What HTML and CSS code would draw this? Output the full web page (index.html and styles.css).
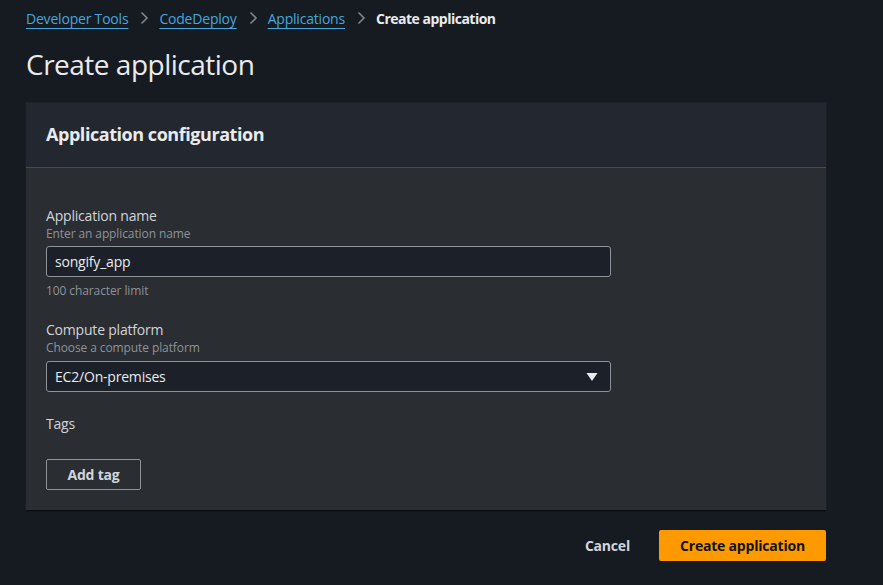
FILE: index.html
```html
<!DOCTYPE html>
<html lang="en">
<head>
<meta charset="utf-8">
<title>Create application</title>
<link rel="stylesheet" href="styles.css">
</head>
<body>
<div class="page">
  <nav class="breadcrumbs">
    <a class="crumb" href="#">Developer Tools</a>
    <svg class="sep" width="10" height="14" viewBox="0 0 10 14"><path d="M2.5 1.5 L8 7 L2.5 12.5" fill="none" stroke="#7d8590" stroke-width="1.6"/></svg>
    <a class="crumb" href="#">CodeDeploy</a>
    <svg class="sep" width="10" height="14" viewBox="0 0 10 14"><path d="M2.5 1.5 L8 7 L2.5 12.5" fill="none" stroke="#7d8590" stroke-width="1.6"/></svg>
    <a class="crumb" href="#">Applications</a>
    <svg class="sep" width="10" height="14" viewBox="0 0 10 14"><path d="M2.5 1.5 L8 7 L2.5 12.5" fill="none" stroke="#7d8590" stroke-width="1.6"/></svg>
    <span class="crumb-current">Create application</span>
  </nav>
  <h1 class="title">Create application</h1>
  <section class="card">
    <header class="card-header">
      <h2 class="card-title">Application configuration</h2>
    </header>
    <div class="card-body">
      <div class="field">
        <label class="label">Application name</label>
        <div class="desc">Enter an application name</div>
        <div class="input">songify_app</div>
        <div class="hint">100 character limit</div>
      </div>
      <div class="field field-platform">
        <label class="label">Compute platform</label>
        <div class="desc">Choose a compute platform</div>
        <div class="input select">
          <span>EC2/On-premises</span>
          <svg width="12" height="10" viewBox="0 0 12 10"><path d="M0.5 1 L11.5 1 L6 9 Z" fill="#e9ebed"/></svg>
        </div>
      </div>
      <div class="field tags">
        <div class="label">Tags</div>
      </div>
      <button class="btn-normal">Add tag</button>
    </div>
  </section>
  <div class="actions">
    <button class="btn-link">Cancel</button>
    <button class="btn-primary">Create application</button>
  </div>
</div>
</body>
</html>
```
FILE: styles.css
```css
html, body {
  margin: 0;
  padding: 0;
  background: #161a21;
}
body {
  font-family: "Open Sans", "Noto Sans", sans-serif;
  color: #d1d5db;
}
.page {
  width: 800px;
  padding: 8px 0 0 26px;
}
.breadcrumbs {
  display: flex;
  align-items: center;
  height: 20px;
  font-size: 14px;
  letter-spacing: -0.2px;
}
.crumb {
  color: #44a8df;
  text-decoration: underline;
  text-underline-offset: 4px;
  text-decoration-thickness: 1px;
}
.sep {
  margin: 0 10px 0 11px;
}
.crumb-current {
  color: #e9ebed;
  font-weight: 700;
  letter-spacing: -0.5px;
}
.title {
  margin: 18px 0 21px;
  font-size: 28px;
  line-height: 36px;
  font-weight: 400;
  color: #e9ebed;
  letter-spacing: -0.5px;
}
.card {
  background: #2a2d32;
  box-shadow: 0 1px 1px #0b0d10, 0 0 0 1px #1f232a;
}
.card-header {
  height: 64px;
  display: flex;
  align-items: center;
  padding: 0 20px;
  background: #232830;
  border-bottom: 1px solid #454b53;
}
.card-title {
  margin: 0 0 3px;
  font-size: 18px;
  font-weight: 700;
  color: #e9ebed;
  letter-spacing: -0.45px;
}
.card-body {
  padding: 38px 20px 20px;
}
.field {
  display: flex;
  flex-direction: column;
  align-items: flex-start;
}
.field + .field {
  margin-top: 21px;
}
.label {
  font-size: 14px;
  line-height: 20px;
  color: #d1d5db;
  letter-spacing: -0.2px;
}
.desc, .hint {
  font-size: 12px;
  line-height: 16px;
  color: #8d9399;
  letter-spacing: -0.1px;
}
.desc {
  margin: 0 0 4px;
}
.field-platform .desc {
  margin-bottom: 5px;
}
.hint {
  margin-top: 6px;
}
.input {
  box-sizing: border-box;
  width: 565px;
  height: 31px;
  border: 1px solid #8d9399;
  border-radius: 3px;
  background: #1b2029;
  color: #e9ebed;
  font-size: 14px;
  letter-spacing: -0.2px;
  padding: 0 8px;
  display: flex;
  align-items: center;
  justify-content: space-between;
}
.select svg {
  margin-right: 4px;
}
.field.tags {
  margin-top: 22px;
}
.btn-normal {
  margin-top: 25px;
  box-sizing: border-box;
  height: 31px;
  width: 95px;
  background: transparent;
  border: 1px solid #8d9399;
  border-radius: 2px;
  color: #d1d5db;
  font-family: inherit;
  font-size: 14px;
  font-weight: 700;
  letter-spacing: -0.2px;
}
.actions {
  display: flex;
  justify-content: flex-end;
  align-items: center;
  margin-top: 20px;
}
.btn-link {
  background: none;
  border: 0;
  color: #d1d5db;
  font-family: inherit;
  font-size: 14px;
  font-weight: 700;
  letter-spacing: -0.2px;
  margin-right: 29px;
  padding: 0;
}
.btn-primary {
  box-sizing: border-box;
  height: 31px;
  width: 167px;
  background: #ff9900;
  border: 0;
  border-radius: 2px;
  color: #0f141a;
  font-family: inherit;
  font-size: 14px;
  font-weight: 700;
  letter-spacing: -0.2px;
}
```
